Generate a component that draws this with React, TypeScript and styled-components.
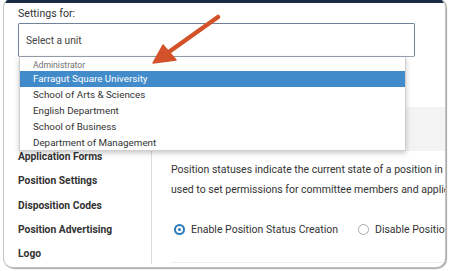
import React from "react";
import styled, { createGlobalStyle } from "styled-components";

const Global = createGlobalStyle`
  html, body { margin: 0; padding: 0; background: #fff; }
  body { width: 450px; height: 271px; overflow: hidden; font-family: Roboto, "Liberation Sans", Arial, sans-serif; color: #333; }
  * { box-sizing: border-box; }
`;

const Page = styled.div`
  position: relative;
  width: 450px;
  height: 271px;
  overflow: hidden;
`;

const Window = styled.div`
  margin: -3px 4px 0 3px;
  height: 271px;
  border: 1px solid #c2c2c2;
  border-radius: 10px;
  box-shadow: 1px 1px 1px rgba(0, 0, 0, 0.35);
  overflow: hidden;
  background: #fff;
  display: flex;
  flex-direction: column;
`;

const TopBar = styled.div`
  height: 5px;
  background: #1b2a47;
  flex: none;
`;

const Body = styled.div`
  padding: 4px 0 0 14px;
`;

const Label = styled.div`
  font-size: 10.6px;
  line-height: 14px;
  color: #333;
  margin-bottom: 2px;
`;

const SelectWrap = styled.div`
  position: relative;
  width: 397px;
  z-index: 2;
`;

const SelectBox = styled.div`
  height: 34px;
  border: 1px solid #6f8299;
  border-bottom-color: #98a2ad;
  border-radius: 2px;
  display: flex;
  align-items: center;
  padding-left: 7px;
  font-size: 10.2px;
  color: #444;
`;

const Dropdown = styled.div`
  position: absolute;
  left: 1px;
  top: 34px;
  width: 387px;
  height: 94px;
  background: #fff;
  border: 1px solid #d0d0d0;
  border-top: none;
  box-shadow: 0 2px 5px rgba(0, 0, 0, 0.22);
  overflow: hidden;
`;

const GroupHead = styled.div`
  height: 14px;
  line-height: 14px;
  padding-left: 13px;
  font-size: 8.6px;
  color: #6f6f6f;
  padding-top: 1px;
`;

const Option = styled.div<{ $active?: boolean }>`
  height: 16px;
  line-height: 16px;
  padding-left: 13px;
  font-size: 9.8px;
  color: ${(p) => (p.$active ? "#fff" : "#333")};
  background: ${(p) => (p.$active ? "#428bca" : "transparent")};
`;

const Main = styled.div`
  margin-top: 50px;
  display: flex;
  flex: 1;
`;

const Sidebar = styled.div`
  width: 147px;
  flex: none;
  padding: 38px 0 0 14px;
`;

const SideItem = styled.div`
  height: 24.3px;
  line-height: 24.3px;
  font-size: 10.3px;
  font-weight: 700;
  color: #333;
  white-space: nowrap;
`;

const Panel = styled.div`
  flex: 1;
  display: flex;
  flex-direction: column;
  min-width: 0;
`;

const PanelHead = styled.div`
  height: 44px;
  background: #f3f3f3;
  flex: none;
`;

const PanelBody = styled.div`
  flex: 1;
  border-left: 1px solid #dcdcdc;
  padding: 9px 0 0 19px;
  margin-bottom: 3px;
  overflow: hidden;
`;

const Para = styled.p`
  margin: 0;
  font-size: 10.5px;
  line-height: 20px;
  color: #333;
  white-space: nowrap;
`;

const RadioRow = styled.div`
  margin-top: 22px;
  display: flex;
  align-items: center;
  height: 14px;
  padding-left: 3px;
  white-space: nowrap;
`;

const RadioOpt = styled.label`
  display: flex;
  align-items: center;
  font-size: 10.5px;
  color: #333;
  margin-right: 20px;
`;

const RadioDot = styled.span<{ $on?: boolean }>`
  width: 11px;
  height: 11px;
  border-radius: 50%;
  border: ${(p) => (p.$on ? "2px solid #2c7bb9" : "1px solid #a9a9a9")};
  margin-right: 6px;
  display: flex;
  align-items: center;
  justify-content: center;
  flex: none;
  &::after {
    content: "";
    width: 3px;
    height: 3px;
    border-radius: 50%;
    background: ${(p) => (p.$on ? "#2c7bb9" : "transparent")};
  }
`;

const Rule = styled.div`
  margin-top: 26px;
  height: 1px;
  background: #ececec;
`;

const Arrow = styled.svg`
  position: absolute;
  left: 0;
  top: 0;
  z-index: 5;
  pointer-events: none;
`;

export default function App() {
  return (
    <Page>
      <Global />
      <Window>
        <TopBar />
        <Body>
          <Label>Settings for:</Label>
          <SelectWrap>
            <SelectBox>Select a unit</SelectBox>
            <Dropdown>
              <GroupHead>Administrator</GroupHead>
              <Option $active>Farragut Square University</Option>
              <Option>School of Arts &amp; Sciences</Option>
              <Option>English Department</Option>
              <Option>School of Business</Option>
              <Option>Department of Management</Option>
            </Dropdown>
          </SelectWrap>
        </Body>
        <Main>
          <Sidebar>
            <SideItem>Application Forms</SideItem>
            <SideItem>Position Settings</SideItem>
            <SideItem>Disposition Codes</SideItem>
            <SideItem>Position Advertising</SideItem>
            <SideItem>Logo</SideItem>
          </Sidebar>
          <Panel>
            <PanelHead />
            <PanelBody>
              <Para>Position statuses indicate the current state of a position in the hiring process.</Para>
              <Para>used to set permissions for committee members and applicants.</Para>
              <RadioRow>
                <RadioOpt>
                  <RadioDot $on />
                  Enable Position Status Creation
                </RadioOpt>
                <RadioOpt>
                  <RadioDot />
                  Disable Position Status Creation
                </RadioOpt>
              </RadioRow>
              <Rule />
            </PanelBody>
          </Panel>
        </Main>
      </Window>
      <Arrow width="450" height="271" viewBox="0 0 450 271">
        <line x1="218" y1="17" x2="166" y2="54" stroke="#d4522a" strokeWidth="4.5" strokeLinecap="round" />
        <polygon points="153,63 163,45 176,60" fill="#d4522a" stroke="#d4522a" strokeWidth="1.5" strokeLinejoin="round" />
      </Arrow>
    </Page>
  );
}
